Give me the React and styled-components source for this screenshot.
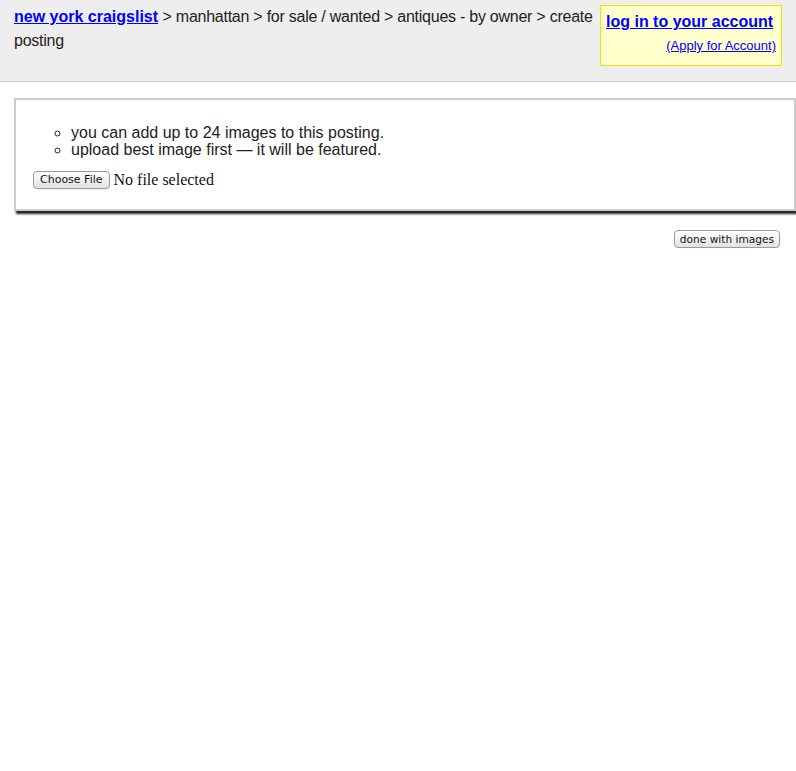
import React from "react";
import styled, { createGlobalStyle } from "styled-components";

const Global = createGlobalStyle`
  html, body { margin: 0; padding: 0; background: #fff; overflow-x: hidden; }
  body { font-family: "Liberation Sans", Arial, Helvetica, sans-serif; color: #222; }
`;

const Header = styled.header`
  background: #eee;
  border-bottom: 1px solid #ccc;
  height: 82px;
  box-sizing: border-box;
  padding: 5px 14px 0 14px;
  font-size: 16px;
  line-height: 24px;
  color: #222;
`;

const Crumbs = styled.span`
  letter-spacing: -0.25px;
`;

const LoginBox = styled.div`
  float: right;
  box-sizing: border-box;
  width: 182px;
  height: 61px;
  background: #ffc;
  border: 1px solid #e6e600;
  padding: 4px 5px 0 5px;
`;

const LoginLink = styled.a`
  display: block;
  font-weight: bold;
  font-size: 16px;
  line-height: 23px;
  color: #00f;
  text-decoration: underline;
`;

const ApplyLink = styled.a`
  display: block;
  text-align: right;
  font-size: 13px;
  line-height: 16px;
  margin-top: 5px;
  color: #00f;
  text-decoration: underline;
`;

const HomeLink = styled.a`
  font-weight: bold;
  color: #00f;
  text-decoration: underline;
`;

const Main = styled.main`
  padding: 16px 0 0 14px;
`;

const Panel = styled.section`
  width: 100%;
  box-sizing: border-box;
  border: 2px solid #ccc;
  padding: 8px 15px 19px 15px;
  box-shadow: 2px 3px 2px #222;
  background: #fff;
`;

const Tips = styled.ul`
  list-style: circle;
  margin: 16px 0 12px 0;
  padding-left: 40px;
  font-size: 16px;
  line-height: 17px;
  color: #222;
`;

const FileRow = styled.div`
  display: flex;
  align-items: center;
  gap: 4px;
  padding-left: 2px;
  height: 20px;
`;

const MacButton = styled.button`
  font-family: "DejaVu Sans", "Lucida Grande", sans-serif;
  font-size: ${(p) => p.$size || 11}px;
  line-height: 14px;
  height: 18px;
  padding: 0 ${(p) => p.$pad || 6}px;
  color: #111;
  border: 1px solid #9a9a9a;
  border-radius: 4px;
  background: linear-gradient(#fff, #f1f1f1 50%, #e2e2e2);
  box-shadow: 0 1px 0 rgba(0, 0, 0, 0.05);
  cursor: default;
`;

const FileStatus = styled.span`
  font-family: "Liberation Serif", "Times New Roman", serif;
  font-size: 16px;
  color: #111;
`;

const Actions = styled.div`
  display: flex;
  justify-content: flex-end;
  padding: 19px 16px 0 0;
`;

export default function App() {
  return (
    <>
      <Global />
      <Header>
        <LoginBox>
          <LoginLink href="#">log in to your account</LoginLink>
          <ApplyLink href="#">(Apply for Account)</ApplyLink>
        </LoginBox>
        <HomeLink href="#">new york craigslist</HomeLink>{" "}
        <Crumbs>&gt; manhattan &gt; for sale / wanted &gt; antiques - by owner &gt; create posting</Crumbs>
      </Header>
      <Main>
        <Panel>
          <Tips>
            <li>you can add up to 24 images to this posting.</li>
            <li>upload best image first — it will be featured.</li>
          </Tips>
          <FileRow>
            <MacButton type="button">Choose File</MacButton>
            <FileStatus>No file selected</FileStatus>
          </FileRow>
        </Panel>
        <Actions>
          <MacButton type="button" $size={10.6} $pad={5}>done with images</MacButton>
        </Actions>
      </Main>
    </>
  );
}
